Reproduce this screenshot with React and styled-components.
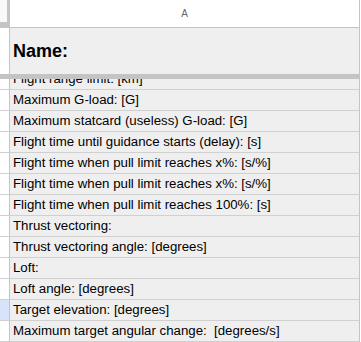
import React, { useLayoutEffect, useRef } from "react";
import styled, { createGlobalStyle } from "styled-components";

const rows = [
  "Flight range limit: [km]",
  "Maximum G-load: [G]",
  "Maximum statcard (useless) G-load: [G]",
  "Flight time until guidance starts (delay): [s]",
  "Flight time when pull limit reaches x%: [s/%]",
  "Flight time when pull limit reaches x%: [s/%]",
  "Flight time when pull limit reaches 100%: [s]",
  "Thrust vectoring:",
  "Thrust vectoring angle: [degrees]",
  "Loft:",
  "Loft angle: [degrees]",
  "Target elevation: [degrees]",
  "Maximum target angular change:  [degrees/s]",
];

const SELECTED_ROW = 11;

const GlobalStyle = createGlobalStyle`
  html, body {
    margin: 0;
    padding: 0;
    background: #ffffff;
  }
  body {
    font-family: "Liberation Sans", Arial, sans-serif;
  }
`;

const Sheet = styled.div`
  width: 361px;
  height: 342px;
  overflow: hidden;
  display: flex;
  flex-direction: column;
  background: #ffffff;
`;

const HeaderRow = styled.div`
  display: flex;
  height: 28px;
  flex-shrink: 0;
`;

const Corner = styled.div`
  box-sizing: border-box;
  width: 10px;
  height: 28px;
  background: #f8f9fa;
  border-right: 3px solid #c4c4c4;
  border-bottom: 6px solid #c4c4c4;
`;

const ColHeader = styled.div`
  box-sizing: border-box;
  width: 350px;
  height: 28px;
  background: #ffffff;
  border-right: 1px solid #c4c4c4;
  border-bottom: 1px solid #c4c4c4;
  color: #666666;
  font-size: 10px;
  line-height: 27px;
  text-align: center;
`;

const Row = styled.div`
  display: flex;
  flex-shrink: 0;
  height: ${(p) => p.$height}px;
`;

const RowHead = styled.div`
  box-sizing: border-box;
  width: 10px;
  background: ${(p) => (p.$selected ? "#d6e3fb" : "#ffffff")};
  border-right: 1px solid #c4c4c4;
  border-bottom: ${(p) => (p.$noLine ? "none" : "1px solid #d0d0d0")};
`;

const Cell = styled.div`
  box-sizing: border-box;
  width: 350px;
  background: #efefef;
  border-right: 1px solid #c4c4c4;
  border-bottom: ${(p) => (p.$noLine ? "none" : "1px solid #d0d0d0")};
  padding-left: 3px;
  color: #000000;
  font-size: ${(p) => (p.$title ? "18px" : "13.25px")};
  font-weight: ${(p) => (p.$title ? 700 : 400)};
  line-height: ${(p) => (p.$title ? 46 : 20)}px;
  white-space: pre;
  overflow: hidden;
`;

const FreezeBar = styled.div`
  height: 5px;
  width: 360px;
  flex-shrink: 0;
  background: #c4c4c4;
`;

const Body = styled.div`
  flex: 1;
  overflow: hidden;
`;

export default function App() {
  const bodyRef = useRef(null);

  useLayoutEffect(() => {
    // frozen first row, the rest scrolled a little
    if (bodyRef.current) bodyRef.current.scrollTop = 11;
  }, []);

  return (
    <>
      <GlobalStyle />
      <Sheet>
        <HeaderRow>
          <Corner />
          <ColHeader>A</ColHeader>
        </HeaderRow>
        <Row $height={46}>
          <RowHead $noLine />
          <Cell $title $noLine>
            Name:
          </Cell>
        </Row>
        <FreezeBar />
        <Body ref={bodyRef}>
          {rows.map((text, i) => (
            <Row key={i} $height={21}>
              <RowHead $selected={i === SELECTED_ROW} />
              <Cell>{text}</Cell>
            </Row>
          ))}
        </Body>
      </Sheet>
    </>
  );
}
